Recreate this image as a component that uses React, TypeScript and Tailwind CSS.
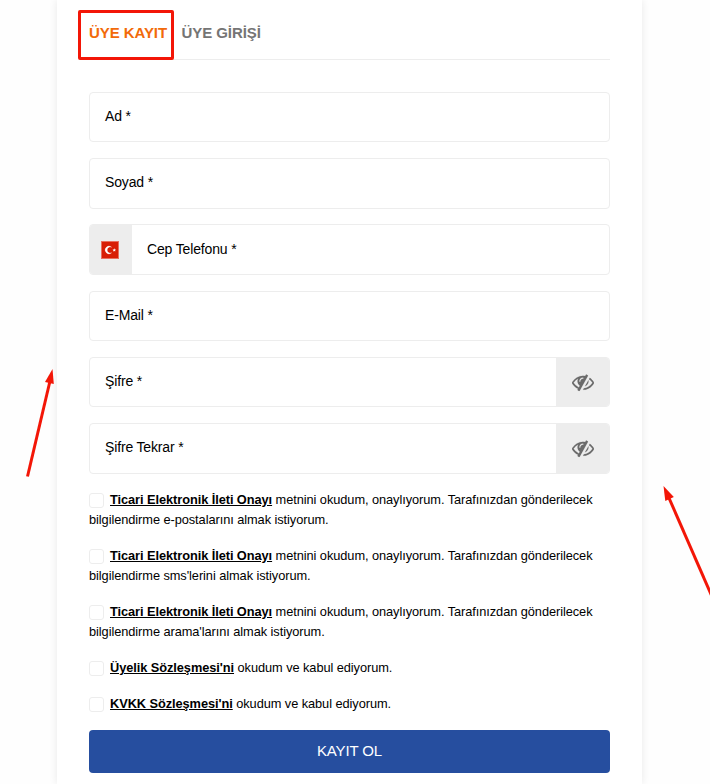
import React from "react";

function EyeSlash() {
  return (
    <svg viewBox="0 0 1792 1792" className="h-[22px] w-[22px] fill-[#6b6b6b] stroke-[#6b6b6b]" strokeWidth="10">
      <path d="M555 1335l78-141q-87-63-136-159t-49-203q0-121 61-225-229 117-381 353 167 258 427 375zm389-759q0-20-14-34t-34-14q-125 0-214.5 89.5t-89.5 214.5q0 20 14 34t34 14 34-14 14-34q0-86 61-147t147-61q20 0 34-14t14-34zm363-191q0 7-1 9-106 189-316 567t-315 566l-49 89q-10 16-28 16-12 0-134-70-16-10-16-28 0-12 44-87-143-65-263.5-173t-208.5-245q-20-31-20-69t20-69q153-235 380-371t496-136q89 0 180 17l54-97q10-16 28-16 5 0 18 6t31 15.5 33 18.5 31.5 18.5 19.5 11.5q16 10 16 27zm37 447q0 139-79 253.5t-209 164.5l280-502q8 45 8 84zm448 128q0 35-20 69-39 64-109 145-150 172-347.5 267t-419.5 95l74-132q212-18 392.5-137t301.5-307q-115-179-282-294l63-112q95 64 182.5 153t144.5 184q20 34 20 69z" />
    </svg>
  );
}

function Flag() {
  return (
    <svg viewBox="0 0 18 18" className="h-[18px] w-[18px]">
      <rect width="18" height="18" fill="#e8705f" />
      <rect x="1" y="1" width="16" height="16" fill="#d81e05" />
      <path d="M10.6 6.2A3.8 3.8 0 1 0 10.6 11.8A3.1 3.1 0 1 1 10.6 6.2Z" fill="#fff" stroke="#fff" strokeWidth="0.3" />
      <path d="M13.3 7.3l.5 1.1 1.2.2-.9.8.2 1.2-1-.6-1.1.6.2-1.2-.8-.8 1.2-.2z" fill="#fff" />
    </svg>
  );
}

function Field({ label, flag, secret }: { label: string; flag?: boolean; secret?: boolean }) {
  return (
    <div className="mb-[15.75px] flex h-[50.5px] overflow-hidden rounded-[4px] border border-[#ededed]">
      {flag && (
        <div className="flex w-[42px] shrink-0 items-center justify-center bg-[#ededed] pr-[2px]">
          <Flag />
        </div>
      )}
      <label className="flex flex-1 items-center pb-[2px] pl-[15px] text-[14px] leading-5 tracking-[-0.15px]">{label}</label>
      {secret && (
        <div className="flex w-[53px] shrink-0 items-center justify-center bg-[#ededed]">
          <EyeSlash />
        </div>
      )}
    </div>
  );
}

function Consent({ title, rest }: { title: string; rest: string }) {
  return (
    <div className="mb-4 text-[12.8px] leading-5 tracking-[-0.068px]">
      <span className="mr-[6px] inline-block h-[15px] w-[15px] rounded-[3px] border border-[#ededed] align-[-4px]" />
      <span className="font-bold underline">{title}</span> {rest}
    </div>
  );
}

const sender = "metnini okudum, onaylıyorum. Tarafınızdan gönderilecek bilgilendirme ";

export default function App() {
  return (
    <div className="relative h-[784px] w-[710px] overflow-hidden bg-[#fefefe] font-['Liberation_Sans',Arial,sans-serif] text-black">
      <main className="ml-[57px] h-full w-[585px] bg-white px-8 shadow-[0_0_8px_rgba(0,0,0,0.09)]">
        <nav className="flex h-[60px] gap-[14.5px] border-b border-[#ededed] pt-[23px] text-[15px] leading-5 font-bold tracking-[-0.07px]">
          <span className="text-[#f26a0a]">ÜYE KAYIT</span>
          <span className="text-[#757575]">ÜYE GİRİŞİ</span>
        </nav>
        <form className="pt-[31.9px]">
          <Field label="Ad *" />
          <Field label="Soyad *" />
          <Field label="Cep Telefonu *" flag />
          <Field label="E-Mail *" />
          <Field label="Şifre *" secret />
          <Field label="Şifre Tekrar *" secret />
          <div className="pt-[0.6px]">
            <Consent title="Ticari Elektronik İleti Onayı" rest={sender + "e-postalarını almak istiyorum."} />
            <Consent title="Ticari Elektronik İleti Onayı" rest={sender + "sms'lerini almak istiyorum."} />
            <Consent title="Ticari Elektronik İleti Onayı" rest={sender + "arama'larını almak istiyorum."} />
            <Consent title="Üyelik Sözleşmesi'ni" rest="okudum ve kabul ediyorum." />
            <Consent title="KVKK Sözleşmesi'ni" rest="okudum ve kabul ediyorum." />
          </div>
          <button type="button" className="block h-[43px] w-full rounded-[4px] bg-[#264e9f] text-[15px] tracking-[-0.15px] text-white">
            KAYIT OL
          </button>
        </form>
      </main>
      <div className="absolute top-[10px] left-[78px] h-[50px] w-[96px] rounded-[2px] border-3 border-[#f31607]" />
      <svg className="absolute inset-0 h-full w-full" viewBox="0 0 710 784">
        <g stroke="#f31607" strokeWidth="3" fill="#f31607">
          <path d="M27.5 476.5L50 381" />
          <path d="M669 498L712 596.5" />
          <path stroke="none" d="M52.5 369L45 382L53.8 384Z" />
          <path stroke="none" d="M663.5 486L665.3 501L673.8 497Z" />
        </g>
      </svg>
    </div>
  );
}
